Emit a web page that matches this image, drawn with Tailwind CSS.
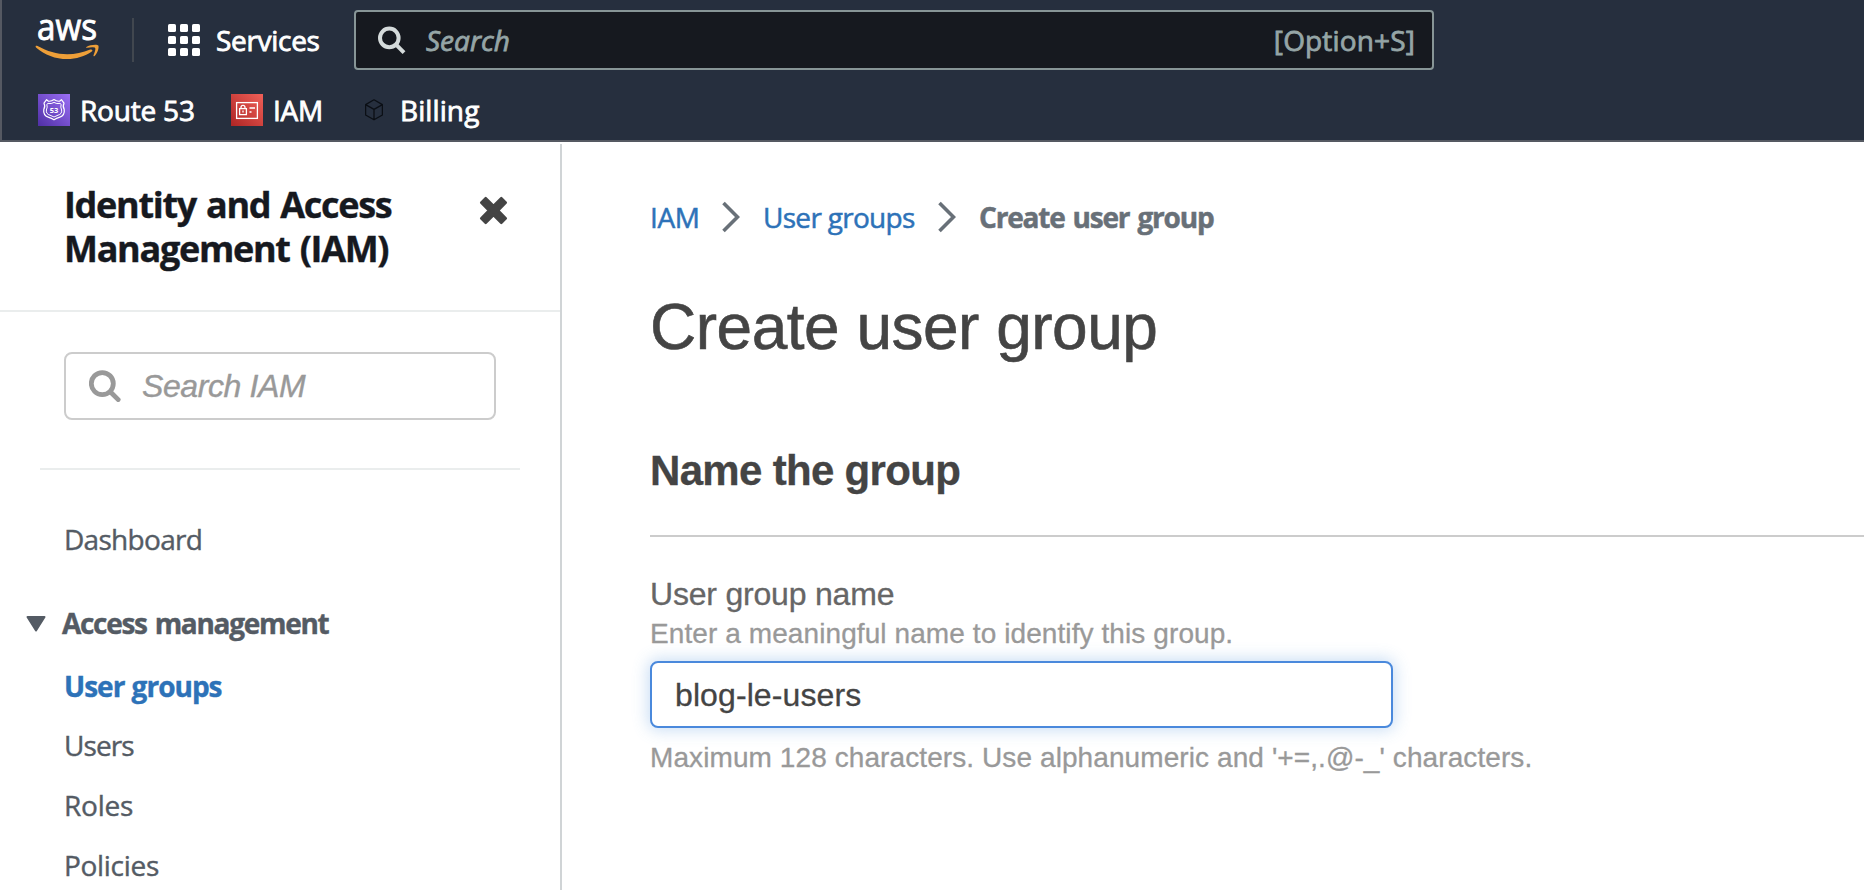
<!DOCTYPE html>
<html lang="en">
<head>
<meta charset="utf-8">
<title>Create user group | IAM</title>
<script src="https://cdn.jsdelivr.net/npm/@tailwindcss/browser@4"></script>
</head>
<body class="flex h-[890px] flex-col overflow-hidden bg-white font-['Open_Sans','Noto_Sans',sans-serif] text-[28px]">

<header class="h-[142px] shrink-0 border-b-2 border-l-2 border-[#555962] bg-[#262f3e] text-white [-webkit-text-stroke:0.8px]">
  <div class="flex h-20 items-center">
    <!-- AWS logo -->
    <svg class="ml-7 h-20 w-20 [-webkit-text-stroke:0]" viewBox="30 0 80 80">
      <text x="37" y="40.3" font-size="36" stroke="#fff" stroke-width="0.9" textLength="60" lengthAdjust="spacingAndGlyphs" fill="#fff" font-family="Open Sans, sans-serif">aws</text>
      <path d="M35.6 46.2C35.9 45.5 36.7 45.6 37.6 46.1C47 51.4 57 54.3 67.2 54.3C75 54.3 83 52.6 90.2 49.6C92 48.9 93.2 50.4 91.8 51.6C85 56.5 76 59.1 67.2 59.1C55.4 59.1 44.6 54.7 36.3 47.7C35.8 47.2 35.4 46.7 35.6 46.2Z" fill="#ee9f38"/>
      <path d="M86.4 46.9C89.4 44.9 97.2 44.1 98.3 45.5C99.3 46.9 97.8 53.1 94.6 55.9C93.9 56.5 93.2 56.2 93.5 55.4C94.4 53.1 96 49.1 95.1 48C94.1 46.9 89.8 47.4 87 47.8C86 47.9 85.8 47.3 86.4 46.9Z" fill="#ee9f38"/>
    </svg>
    <div class="ml-[22px] h-11 w-0.5 bg-[#41474f]"></div>
    <svg class="ml-[34px] size-8" viewBox="0 0 32 32" fill="#fff">
      <rect width="8" height="8" rx="1.6"/><rect x="12" width="8" height="8" rx="1.6"/><rect x="24" width="8" height="8" rx="1.6"/>
      <rect y="12" width="8" height="8" rx="1.6"/><rect x="12" y="12" width="8" height="8" rx="1.6"/><rect x="24" y="12" width="8" height="8" rx="1.6"/>
      <rect y="24" width="8" height="8" rx="1.6"/><rect x="12" y="24" width="8" height="8" rx="1.6"/><rect x="24" y="24" width="8" height="8" rx="1.6"/>
    </svg>
    <span class="ml-4 w-[138px] tracking-[-0.3px]">Services</span>
    <div class="flex h-[60px] w-[1080px] items-center rounded border-2 border-[#879596] bg-[#16191f] pr-[17px] pl-[22px] text-[#95a5a6]">
      <svg class="size-7" viewBox="0 0 28 28" fill="none" stroke="#d5dbdb" stroke-width="4">
        <circle cx="11.3" cy="11.9" r="9.3"/><path d="M17.6 18.2L26 26.6"/>
      </svg>
      <span class="ml-5 grow italic">Search</span>
      <span class="tracking-[0.15px]">[Option+S]</span>
    </div>
  </div>
  <nav class="flex h-[60px] items-center">
    <svg class="ml-9 size-8 [-webkit-text-stroke:0]" viewBox="0 0 32 32">
      <defs>
        <linearGradient id="violet" x1="0" y1="1" x2="1" y2="0"><stop stop-color="#4f2fa5"/><stop offset="1" stop-color="#9b6ff5"/></linearGradient>
        <linearGradient id="red" x1="0" y1="1" x2="1" y2="0"><stop stop-color="#ae2524"/><stop offset="1" stop-color="#f06058"/></linearGradient>
      </defs>
      <path fill="url(#violet)" d="M0 0H32V32H0Z"/>
      <g fill="none" stroke="#fff" stroke-linejoin="round">
        <path stroke-width="1.2" d="M8.6 5.6L10.4 7.2Q13.4 7.6 16 5.6Q18.6 7.6 21.6 7.2L23.4 5.6L26 9.2Q24.4 12.4 26.2 15.4Q27.2 21.6 21.2 23.4Q18.4 24.2 16 25.8Q13.6 24.2 10.8 23.4Q4.8 21.6 5.8 15.4Q7.6 12.4 6 9.2Z"/>
        <path stroke-width="1" d="M10 9.4Q13.4 10.2 16 8.4Q18.6 10.2 22 9.4L23.2 10.4Q22.2 13 23.6 16Q24.2 20 20 21.2L16 23L12 21.2Q7.8 20 8.4 16Q9.8 13 8.8 10.4Z"/>
      </g>
      <text x="16" y="18.8" text-anchor="middle" font-size="7.5" font-weight="700" fill="#fff" font-family="Open Sans, sans-serif">53</text>
    </svg>
    <span class="ml-[10px] w-[151px] tracking-[-0.2px]">Route 53</span>
    <svg class="size-8" viewBox="0 0 32 32" fill="none" stroke="#fff">
      <path fill="url(#red)" stroke="none" d="M0 0H32V32H0Z"/>
      <rect x="5.6" y="8.6" width="20.8" height="15.8" stroke-width="1.3"/>
      <rect x="8.6" y="14.6" width="6.8" height="6" stroke-width="1.3"/>
      <path stroke-width="1.3" d="M10 14.6V13.4A2 2 0 0 1 14 13.4V14.6M12 16.6V18.6M18.5 14H24M18.5 18H20.5M22 14H22.5"/>
    </svg>
    <span class="ml-[10px] w-[92px] tracking-[-0.3px]">IAM</span>
    <svg class="h-[22px] w-[18px]" viewBox="0 0 18 22" fill="none" stroke="#0b0f15" stroke-width="1.3" stroke-linejoin="round">
      <path d="M9 .8L17.4 5.6V16L9 20.8L.6 16V5.6ZM.6 5.6L9 10.4L17.4 5.6M9 10.4V20.8"/>
    </svg>
    <span class="ml-[17px] tracking-[0.1px]">Billing</span>
  </nav>
</header>

<div class="flex min-h-0 grow pt-0.5">
  <aside class="w-[562px] shrink-0 border-r-2 border-[#d0d4d6] text-[#545b64] [-webkit-text-stroke:0.4px]">
    <div class="flex h-[168px] border-b-2 border-[#eaeded] pt-[39px] pl-16">
      <h2 class="w-[414px] text-[36px] leading-[44px] font-bold tracking-[-1.3px] text-[#16191f] [word-spacing:2px]">Identity and Access<br>Management (IAM)</h2>
      <svg class="mt-3 size-[30px]" viewBox="0 0 30 30">
        <path fill="#444" stroke="#444" stroke-width="2.5" stroke-linejoin="round" d="M7.7 3.2L15.5 11L23.3 3.2L27.8 7.7L20 15.5L27.8 23.3L23.3 27.8L15.5 20L7.7 27.8L3.2 23.3L11 15.5L3.2 7.7Z"/>
      </svg>
    </div>
    <div class="mx-10 border-b-2 border-[#eaeded] px-6 pt-10 pb-12">
      <div class="flex h-[68px] items-center rounded-lg border-2 border-[#ccc] pl-[23px] font-['Liberation_Sans',sans-serif] text-[32px] text-[#999] italic">
        <svg class="size-8" viewBox="0 0 32 32" fill="none" stroke="#999" stroke-width="4.8">
          <circle cx="13.3" cy="13.6" r="11"/><path stroke-linecap="round" d="M21.5 22L29.2 29.6"/>
        </svg>
        <span class="ml-[21px] tracking-[-0.4px]">Search IAM</span>
      </div>
    </div>
    <nav class="pt-[39px] pl-16 leading-[60px]">
      <div class="tracking-[-0.7px]">Dashboard</div>
      <div class="mt-6 -ml-[38px] flex items-center font-bold tracking-[-1.3px] [word-spacing:2px]">
        <svg class="mt-px mr-4 h-4 w-5" viewBox="0 0 20 16"><path fill="#545b64" stroke="#545b64" stroke-width="2" stroke-linejoin="round" d="M1.5 1H18.5L10 14.5Z"/></svg>
        <span>Access management</span>
      </div>
      <div class="mt-[3px] font-bold tracking-[-1px] text-[#2d72b8] [word-spacing:1px]">User groups</div>
      <div class="-mt-px tracking-[-0.9px]">Users</div>
      <div class="tracking-[-0.2px]">Roles</div>
      <div class="tracking-[-0.3px]">Policies</div>
    </nav>
  </aside>

  <main class="grow pl-[88px] font-['Liberation_Sans',sans-serif] [-webkit-text-stroke:0.3px]">
    <nav class="mt-[43px] flex h-[60px] items-center font-['Open_Sans','Noto_Sans',sans-serif] text-[#2d72b8] [-webkit-text-stroke:0.5px]">
      <span class="w-[72px] tracking-[-0.4px]">IAM</span>
      <svg class="h-8 w-[18px]" viewBox="0 0 18 32" fill="none" stroke="#687078" stroke-width="3.6"><path d="M1.5 2L15.5 16L1.5 30"/></svg>
      <span class="ml-[23px] w-[175px] tracking-[-0.7px]">User groups</span>
      <svg class="h-8 w-[18px]" viewBox="0 0 18 32" fill="none" stroke="#687078" stroke-width="3.6"><path d="M1.5 2L15.5 16L1.5 30"/></svg>
      <span class="ml-[23px] font-bold tracking-[-1.2px] text-[#687078] [word-spacing:2px]">Create user group</span>
    </nav>
    <h1 class="mt-10 text-[64px] leading-[80px] tracking-[-0.5px] text-[#444] [-webkit-text-stroke:0.6px]">Create user group</h1>
    <div class="mt-16 h-[106px] border-b-2 border-[#ccc] text-[42px] leading-[80px] font-bold tracking-[-0.68px] text-[#444]">Name the group</div>
    <label class="mt-[37px] block text-[32px] leading-10 tracking-[-0.2px] text-[#666]">User group name</label>
    <p class="h-[47px] leading-10 tracking-[0.09px] text-[#999]">Enter a meaningful name to identify this group.</p>
    <div class="flex h-[67px] w-[743px] items-center rounded-lg border-2 border-[#4a89dc] bg-white pl-[23px] text-[32px] tracking-[0.1px] text-[#444] shadow-[0_0_16px_2px_rgba(74,144,220,0.3)]">blog-le-users</div>
    <p class="mt-[10px] leading-10 tracking-[0.09px] text-[#999]">Maximum 128 characters. Use alphanumeric and '+=,.@-_' characters.</p>
  </main>
</div>
</body>
</html>
